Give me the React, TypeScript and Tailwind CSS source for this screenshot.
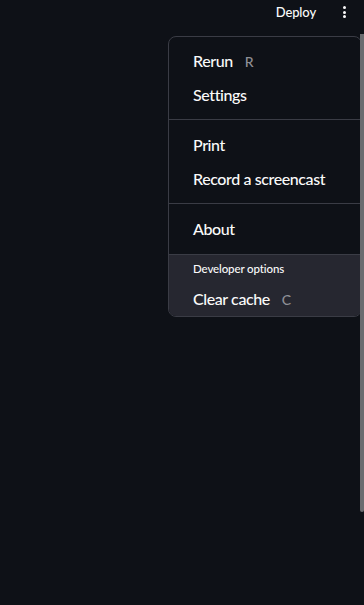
const font = { fontFamily: '"Lato", "Noto Sans", sans-serif' }

export default function App() {
  return (
    <div
      className="relative h-[605px] w-[364px] overflow-hidden bg-[#0e1117] text-[#fafafa]"
      style={font}
    >
      <Header />
      <MainMenu />
      <div className="absolute right-0 top-[34px] h-[478px] w-[4px] rounded-b-[2px] bg-[#6b6c70]" />
    </div>
  )
}

const Header = () => {
  return (
    <div className="flex h-[24px] items-center justify-end pr-[18px]">
      <button className="text-[13px] font-medium leading-none tracking-[-0.01em] text-[#fafafa]">
        Deploy
      </button>
      <button className="ml-[27px] flex flex-col items-center gap-[1.5px] py-[5px]">
        <span className="h-[3px] w-[3px] rounded-full bg-[#fafafa]" />
        <span className="h-[3px] w-[3px] rounded-full bg-[#fafafa]" />
        <span className="h-[3px] w-[3px] rounded-full bg-[#fafafa]" />
      </button>
    </div>
  )
}

const MainMenu = () => {
  return (
    <div className="absolute left-[168px] top-[36px] w-[194px] overflow-hidden rounded-[8px] border border-[#3a3c45] bg-[#0e1117]">
      <div className="pb-[7px] pt-[7px]">
        <MenuItem label="Rerun" shortcut="R" />
        <MenuItem label="Settings" />
      </div>
      <div className="h-px bg-[#3a3c45]" />
      <div className="pb-[7px] pt-[8px]">
        <MenuItem label="Print" />
        <MenuItem label="Record a screencast" />
      </div>
      <div className="h-px bg-[#3a3c45]" />
      <div className="pb-[8px] pt-[8px]">
        <MenuItem label="About" />
      </div>
      <div className="border-t border-[#3a3c45] bg-[#262730]">
        <p className="flex h-[27px] items-center pl-[24px] text-[11.5px] font-medium tracking-[-0.01em] text-[#fafafa]">
          Developer options
        </p>
        <MenuItem label="Clear cache" shortcut="C" />
      </div>
    </div>
  )
}

interface MenuItemProps {
  label: string
  shortcut?: string
}

const MenuItem = ({ label, shortcut }: MenuItemProps) => {
  return (
    <div className="flex h-[34px] cursor-pointer items-center pl-[24px] text-[16px] font-medium tracking-[-0.025em]">
      <span>{label}</span>
      {shortcut && (
        <span className="ml-[12px] text-[14px] text-[#8e8f96]">{shortcut}</span>
      )}
    </div>
  )
}
